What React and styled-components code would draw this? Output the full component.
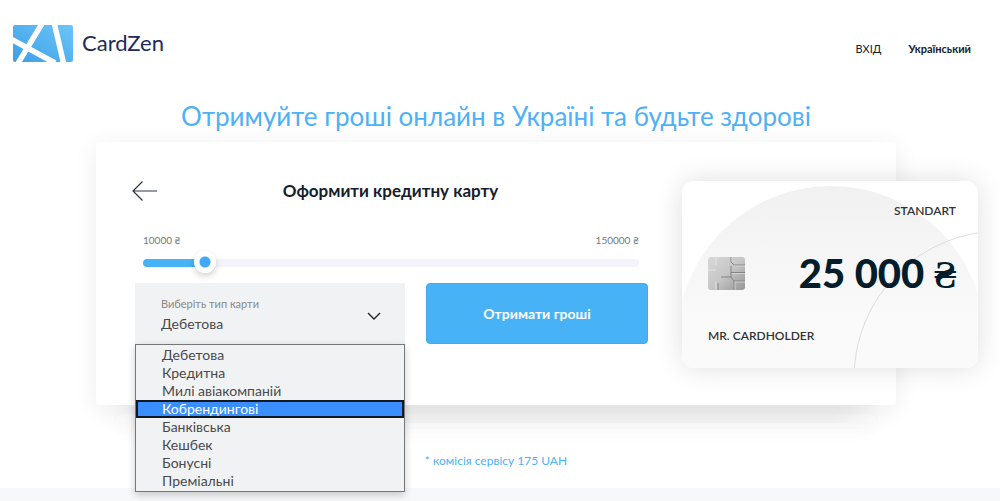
import styled, { createGlobalStyle } from 'styled-components';
import { useState } from 'react';


const GlobalStyle = createGlobalStyle`
  * {
    box-sizing: border-box;
  }

  body {
    margin: 0;
    background: #fff;
    color: #14202c;
    font-family: 'Lato', 'Open Sans', sans-serif;
    overflow-x: hidden;
  }
`;

const Header = styled.header`
  display: flex;
  align-items: center;
  justify-content: space-between;
  height: 86px;
  padding: 0 29px 0 13px;
`;

const Logo = styled.a`
  display: flex;
  align-items: center;
  gap: 9px;
  color: #1d2a5c;
  font-size: 22px;
  line-height: 24px;
  text-decoration: none;
`;

const Nav = styled.nav`
  display: flex;
  gap: 27px;
  padding-top: 12px;
`;

const NavLink = styled.a`
  color: #14202c;
  font-size: 11px;
  font-weight: ${({ $bold }) => ($bold ? 700 : 400)};
  line-height: 16px;
  text-decoration: none;
`;

const Main = styled.main`
  padding: 14px 104px 19px 96px;
`;

const Title = styled.h1`
  margin: 0 0 10px;
  color: #4eb0f7;
  font-size: 26px;
  font-weight: 400;
  line-height: 32px;
  text-align: center;
`;

const Panel = styled.section`
  position: relative;
  z-index: 2;
  display: grid;
  grid-template-columns: minmax(0, 552fr) minmax(0, 248fr);
  min-height: 263px;
  border-radius: 4px;
  background: #fff;
  box-shadow: 0 4px 24px rgba(0, 0, 0, 0.08);
`;

const PanelLayer = styled.div`
  height: 9px;
  margin: 0 ${({ $inset }) => $inset}px;
  border-radius: 0 0 4px 4px;
  background: linear-gradient(to right, transparent, #f1f1f1 40px calc(100% - 40px), transparent);
  box-shadow: 0 6px 20px rgba(0, 0, 0, 0.05);
`;

const Form = styled.form`
  padding: 36px 0 0 36px;
`;

const FormHead = styled.div`
  display: flex;
  align-items: center;
  height: 26px;
  padding-right: 24px;
`;

const BackButton = styled.button`
  display: flex;
  padding: 0;
  border: none;
  background: none;
`;

const FormTitle = styled.h2`
  flex: 1;
  margin: 0;
  font-size: 17px;
  font-weight: 700;
  line-height: 20px;
  text-align: center;
`;

const RangeField = styled.div`
  margin: 29px 9px 0 11px;
`;

const RangeLabels = styled.div`
  display: flex;
  justify-content: space-between;
  color: #777;
  font-size: 10px;
  line-height: 14px;
`;

const Range = styled.input`
  display: block;
  width: 100%;
  height: 22px;
  margin: 5px 0 0;
  background: none;
  appearance: none;

  &::-webkit-slider-runnable-track {
    height: 8px;
    border-radius: 4px;
    background: linear-gradient(to right, #47b2f5 ${({ $fill }) => $fill}%, #f3f3f9 ${({ $fill }) => $fill}%);
  }

  &::-webkit-slider-thumb {
    width: 22px;
    height: 22px;
    margin-top: -8px;
    border: none;
    border-radius: 50%;
    background: radial-gradient(circle, #3fa9f5 5px, #fff 6px);
    box-shadow: 0 3px 6px rgba(0, 0, 0, 0.18);
    appearance: none;
  }
`;

const FormRow = styled.div`
  display: grid;
  grid-template-columns: minmax(0, 270fr) minmax(0, 222fr);
  gap: 21px;
  margin: 9px 0 0 3px;
`;

const SelectField = styled.div`
  position: relative;
  height: 61px;
  background: #f1f2f4;

  label {
    position: absolute;
    top: 13px;
    left: 26px;
    color: #888;
    font-size: 11px;
    line-height: 16px;
  }

  select {
    width: 100%;
    height: 100%;
    padding: 19px 40px 0 26px;
    border: none;
    background: none;
    color: #4a4a4a;
    font-family: inherit;
    font-size: 14px;
    appearance: none;
  }

  svg {
    position: absolute;
    top: 29px;
    right: 24px;
    pointer-events: none;
  }
`;

const Options = styled.ul`
  position: absolute;
  z-index: 3;
  top: 61px;
  left: 0;
  width: 100%;
  margin: 0;
  padding: 1px 0;
  border: 1px solid #777;
  background: #f1f2f4;
  box-shadow: 0 3px 8px rgba(0, 0, 0, 0.2);
  list-style: none;
`;

const Option = styled.li`
  height: 18px;
  padding: 0 24px;
  border: 2px solid ${({ $active }) => ($active ? '#101820' : 'transparent')};
  background: ${({ $active }) => ($active ? '#3b8eff' : 'none')};
  color: ${({ $active }) => ($active ? '#fff' : '#4a4a4a')};
  font-size: 14px;
  line-height: 14px;
`;

const SubmitButton = styled.button`
  height: 61px;
  border: 1px solid #41abee;
  border-radius: 4px;
  background: #47b2f5;
  color: #fff;
  font-family: inherit;
  font-size: 14px;
  font-weight: 700;
`;

const CreditCard = styled.div`
  position: relative;
  display: flex;
  flex-direction: column;
  justify-content: space-between;
  height: 187px;
  margin: 39px -82px 0 34px;
  padding: 22px 22px 24px 26px;
  border-radius: 12px;
  background: linear-gradient(#fff 50%, #fafafa 75%);
  box-shadow: 0 0 28px rgba(0, 0, 0, 0.13);
  overflow: hidden;
`;

const CardArt = styled.svg`
  position: absolute;
  top: 0;
  left: 0;
  width: 100%;
  height: 100%;
`;

const CardText = styled.div`
  position: relative;
  color: #333;
  font-size: 12px;
  font-weight: 600;
  line-height: 16px;
  text-align: ${({ $align }) => $align};
`;

const CardMiddle = styled.div`
  position: relative;
  display: flex;
  align-items: center;
  justify-content: space-between;
`;

const Amount = styled.div`
  color: #051c2b;
  font-size: 40px;
  font-weight: 900;
  line-height: 40px;

  span {
    font-family: 'Liberation Serif', serif;
    font-weight: 700;
  }
`;

const Note = styled.p`
  margin: 30px 0 0;
  color: #4eb0f7;
  font-size: 12px;
  line-height: 16px;
  text-align: center;
`;

const Footer = styled.footer`
  height: 13px;
  background: #f7f8f9;
`;

const cardTypes = [
  'Дебетова',
  'Кредитна',
  'Милі авіакомпаній',
  'Кобрендингові',
  'Банківська',
  'Кешбек',
  'Бонусні',
  'Преміальні',
];

const MIN = 10000;
const MAX = 150000;

function LogoMark() {
  return (
    <svg width="60" height="37" viewBox="0 0 60 37" aria-hidden="true">
      <defs>
        <linearGradient id="logo-fill" x1="0" y1="1" x2="1" y2="0">
          <stop offset="0" stopColor="#3b9fe6" />
          <stop offset="1" stopColor="#6cc5f8" />
        </linearGradient>
        <clipPath id="logo-clip">
          <rect width="60" height="37" rx="2" />
        </clipPath>
      </defs>
      <g clipPath="url(#logo-clip)">
        <rect width="60" height="37" fill="url(#logo-fill)" />
        <path d="M-2 14 L42 38 M30 -3 L4 40 M41 -3 L51 40" stroke="#fff" strokeWidth="5.5" fill="none" />
      </g>
    </svg>
  )
}

function Chip() {
  return (
    <svg width="37" height="33" viewBox="0 0 37 33" aria-hidden="true">
      <defs>
        <linearGradient id="chip-fill" x1="0" y1="0" x2="1" y2="1">
          <stop offset="0" stopColor="#d9d9d9" />
          <stop offset="0.5" stopColor="#c6c6c6" />
          <stop offset="1" stopColor="#969696" />
        </linearGradient>
      </defs>
      <rect width="37" height="33" rx="3" fill="url(#chip-fill)" />
      <path d="M8 0 V8 M0 13 H8 M8 25 V33" stroke="#e6e6e6" fill="none" />
      <path d="M10 33 V26 M13 20 H23 M37 8 H26 L23 5 V0 M37 15.5 H23 M37 24 H26 L23 20 V9 M26 24 V33" stroke="#858585" fill="none" />
      <path d="M37 9 H26 M37 16.5 H24 M37 25 H27 V33 M24 0 V5" stroke="#dcdcdc" strokeWidth="0.7" fill="none" />
    </svg>
  )
}

function App() {
  const [sum, setSum] = useState(25000);
  const [type, setType] = useState('Дебетова');
  const [active, setActive] = useState('Кобрендингові');

  return (
    <>
      <GlobalStyle />
      <Header>
        <Logo href="#">
          <LogoMark />
          CardZen
        </Logo>
        <Nav>
          <NavLink href="#">ВХІД</NavLink>
          <NavLink href="#" $bold>Український</NavLink>
        </Nav>
      </Header>
      <Main>
        <Title>Отримуйте гроші онлайн в Україні та будьте здорові</Title>
        <Panel>
          <Form onSubmit={(e) => { e.preventDefault() }}>
            <FormHead>
              <BackButton type="button" aria-label="Назад">
                <svg width="25" height="20" viewBox="0 0 25 20" fill="none" stroke="#2b3640" strokeWidth="1.2">
                  <path d="M25 10 H1 M10.500 0.500 L1 10 L10.500 19.500" />
                </svg>
              </BackButton>
              <FormTitle>Оформити кредитну карту</FormTitle>
            </FormHead>
            <RangeField>
              <RangeLabels>
                <span>10000 ₴</span>
                <span>150000 ₴</span>
              </RangeLabels>
              <Range
                type="range"
                aria-label="Сума"
                min={MIN}
                max={MAX}
                step="1000"
                value={sum}
                $fill={((sum - MIN) / (MAX - MIN)) * 100}
                onChange={(e) => { setSum(Number(e.target.value)) }}
              />
            </RangeField>
            <FormRow>
              <SelectField>
                <label htmlFor="card-type">Виберіть тип карти</label>
                <select id="card-type" value={type} onChange={(e) => { setType(e.target.value) }}>
                  {cardTypes.map((name) => <option key={name}>{name}</option>)}
                </select>
                <svg width="14" height="8" viewBox="0 0 14 8" fill="none" stroke="#222" strokeWidth="1.4">
                  <path d="M1 1 L7 7 L13 1" />
                </svg>
                <Options role="listbox" aria-label="Виберіть тип карти">
                  {cardTypes.map((name) => (
                    <Option
                      key={name}
                      role="option"
                      aria-selected={name === active}
                      $active={name === active}
                      onMouseEnter={() => { setActive(name) }}
                      onClick={() => { setType(name) }}
                    >
                      {name}
                    </Option>
                  ))}
                </Options>
              </SelectField>
              <SubmitButton type="submit">Отримати гроші</SubmitButton>
            </FormRow>
          </Form>
          <CreditCard>
            <CardArt viewBox="0 0 296 187" preserveAspectRatio="none" aria-hidden="true">
              <defs>
                <linearGradient id="card-circle" x1="0" y1="0" x2="0" y2="1">
                  <stop offset="0" stopColor="#f1f1f1" />
                  <stop offset="0.450" stopColor="#fafafa" />
                </linearGradient>
              </defs>
              <circle cx="149" cy="159" r="154" fill="url(#card-circle)" />
              <circle cx="319" cy="197" r="147" fill="none" stroke="#dcdcdc" />
            </CardArt>
            <CardText $align="right">STANDART</CardText>
            <CardMiddle>
              <Chip />
              <Amount>25 000 <span>₴</span></Amount>
            </CardMiddle>
            <CardText $align="left">MR. CARDHOLDER</CardText>
          </CreditCard>
        </Panel>
        <PanelLayer $inset={12} />
        <PanelLayer $inset={24} />
        <Note>* комісія сервісу 175 UAH</Note>
      </Main>
      <Footer />
    </>
  )
}

export default App;
